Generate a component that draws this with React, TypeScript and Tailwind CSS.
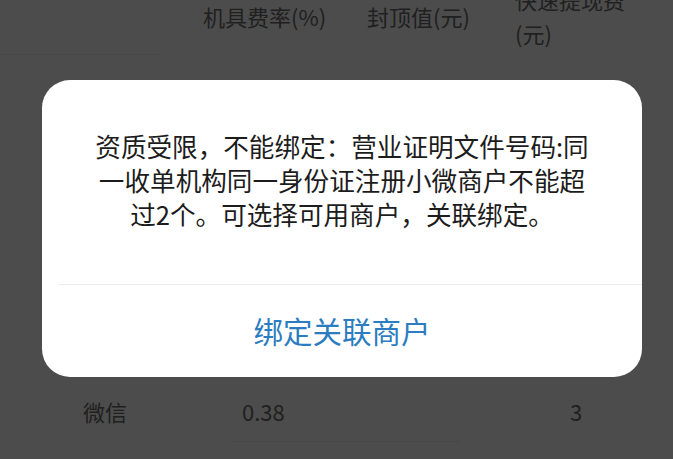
import React from 'react';

const font = { fontFamily: '"Noto Sans CJK SC", "Noto Sans", sans-serif' };

function RateTable() {
  return (
    <div className="text-[22px] text-[#202020]">
      <div className="-mt-[18px] grid grid-cols-[203px_164px_148px_1fr] items-center leading-[34px]">
        <div />
        <div className="whitespace-nowrap">机具费率(%)</div>
        <div className="whitespace-nowrap">封顶值(元)</div>
        <div>
          快速提现费
          <br />
          (元)
        </div>
      </div>
      <div className="mt-[4px] h-px w-[160px] bg-[#474747]" />
      <div className="h-[339px]" />
      <div className="grid grid-cols-[159px_328px_1fr] items-center pl-[83px] leading-[34px]">
        <div>微信</div>
        <div>0.38</div>
        <div>3</div>
      </div>
      <div className="ml-[230px] mt-[13px] h-px w-[230px] bg-[#474747]" />
    </div>
  );
}

function BindDialog() {
  return (
    <div className="absolute left-[42px] top-[80px] flex h-[297px] w-[600px] flex-col overflow-hidden rounded-[28px] bg-white">
      <div className="flex h-[204px] flex-col items-center pt-[49px]">
        <p className="whitespace-nowrap text-center text-[25.6px] leading-[34px] text-[#1c1c1c]">
          资质受限，不能绑定：营业证明文件号码:同
          <br />
          一收单机构同一身份证注册小微商户不能超
          <br />
          过2个。可选择可用商户，关联绑定。
        </p>
      </div>
      <div className="ml-[16px] h-px bg-[#ececec]" />
      <button
        type="button"
        className="flex flex-1 items-center justify-center text-[29.5px] leading-none text-[#2b7cc0]"
      >
        绑定关联商户
      </button>
    </div>
  );
}

export default function App() {
  return (
    <div className="relative h-[459px] w-[673px] overflow-hidden bg-[#4c4c4c]" style={font}>
      <RateTable />
      <BindDialog />
    </div>
  );
}
